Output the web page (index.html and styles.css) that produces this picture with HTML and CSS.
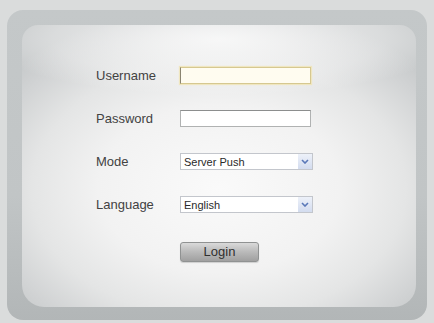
FILE: index.html
```html
<!DOCTYPE html>
<html>
<head>
  <title>Login</title>
  <link rel="stylesheet" href="styles.css">
</head>
<body>
  <div class="frame">
    <div class="panel">
      <form class="login-form">
        <label class="field-label">Username</label>
        <input class="text-input focused" type="text">

        <label class="field-label">Password</label>
        <input class="text-input" type="password">

        <label class="field-label">Mode</label>
        <div class="fake-select">
          <span class="select-text">Server Push</span>
          <span class="select-arrow">
            <svg width="8" height="5" viewBox="0 0 8 5"><path d="M1 1 L4 4 L7 1" fill="none" stroke="#5a78b8" stroke-width="1.6"/></svg>
          </span>
        </div>

        <label class="field-label">Language</label>
        <div class="fake-select">
          <span class="select-text">English</span>
          <span class="select-arrow">
            <svg width="8" height="5" viewBox="0 0 8 5"><path d="M1 1 L4 4 L7 1" fill="none" stroke="#5a78b8" stroke-width="1.6"/></svg>
          </span>
        </div>

        <span></span>
        <button class="login-btn" type="button">Login</button>
      </form>
    </div>
  </div>
</body>
</html>
```

FILE: styles.css
```css
body {
  margin: 0;
  background-color: #dadcdc;
  font-family: 'Liberation Sans', Arial, sans-serif;
}
.frame {
  margin: 10px 7px 0 7px;
  height: 310px;
  box-sizing: border-box;
  padding: 15px 11px 13px 15px;
  border-radius: 16px;
  background: linear-gradient(to bottom, #c4c8c9 0%, #c1c5c6 60%, #b2b6b7 100%);
}
.panel {
  height: 100%;
  box-sizing: border-box;
  border-radius: 16px 16px 22px 22px;
  padding: 42px 0 0 74px;
  background:
    radial-gradient(ellipse 60% 20% at 50% 5%, rgba(252, 252, 252, 0.85) 0%, rgba(248, 248, 248, 0.4) 70%, rgba(240, 240, 240, 0) 100%),
    radial-gradient(ellipse 68% 66% at 50% 58%, #fafafa 0%, #f2f2f2 45%, #e4e5e5 70%, #d0d2d3 90%, #c6c9ca 100%),
    #e6e7e7;
}
.login-form {
  display: grid;
  grid-template-columns: 84px 133px;
  grid-auto-rows: 17px;
  row-gap: 26px;
  align-items: center;
}
.field-label {
  font-size: 13px;
  color: #424242;
}
.text-input {
  width: 131px;
  height: 17px;
  box-sizing: border-box;
  margin: 0;
  border: 1px solid #b0b2b2;
  border-top-color: #8c8e8e;
  background-color: #ffffff;
}
.text-input.focused {
  border: 1px solid #d6c890;
  border-left-color: #8a8470;
  background-color: #fffcf0;
  box-shadow: 0 0 1px 1px #efe6c0;
}
.fake-select {
  width: 133px;
  height: 17px;
  box-sizing: border-box;
  border: 1px solid #c3c6cc;
  background-color: #ffffff;
  display: flex;
  align-items: center;
  justify-content: space-between;
}
.select-text {
  font-size: 11px;
  color: #2a2a2a;
  padding-left: 3px;
}
.select-arrow {
  width: 14px;
  height: 15px;
  background: linear-gradient(to bottom, #edf1f9, #d3dcef);
  display: flex;
  align-items: center;
  justify-content: center;
}
.login-btn {
  width: 79px;
  height: 20px;
  margin-top: 8px;
  padding: 0;
  font-family: 'Liberation Sans', Arial, sans-serif;
  font-size: 13px;
  color: #303030;
  border: 1px solid #909292;
  border-radius: 3px;
  background: linear-gradient(to bottom, #dadada 0%, #bcbcbc 45%, #a0a0a0 100%);
  box-shadow: 0 1px 1px rgba(0, 0, 0, 0.15);
}
```
